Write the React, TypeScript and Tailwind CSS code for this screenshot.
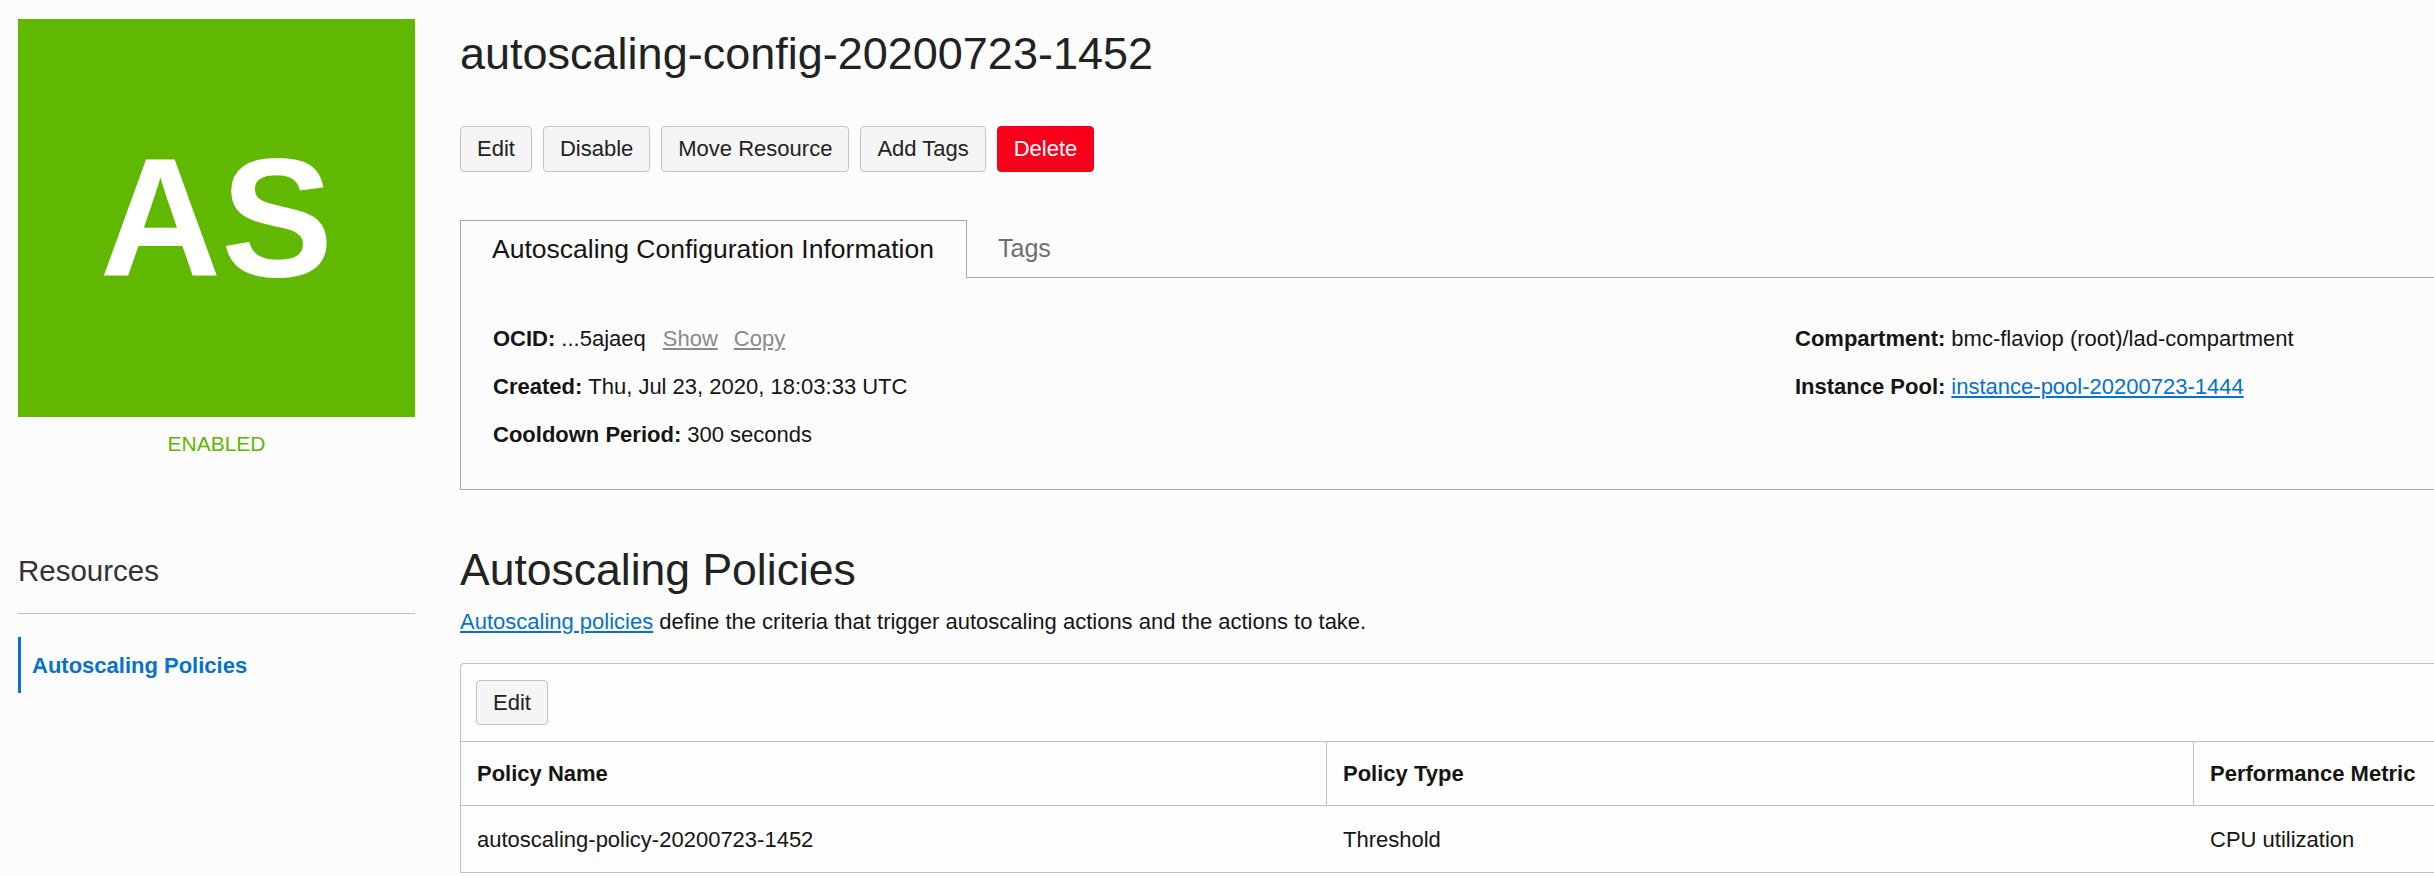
const font = { fontFamily: '"Liberation Sans", Arial, sans-serif' };

const actions = ['Edit', 'Disable', 'Move Resource', 'Add Tags'];

const Button = ({ label, danger = false }: { label: string; danger?: boolean }) => (
  <button
    className={
      danger
        ? 'h-[46px] px-[16px] rounded-[4px] border border-[#f80019] bg-[#f80019] text-white text-[22px] leading-none'
        : 'h-[46px] px-[16px] rounded-[4px] border border-[#bfc4cb] bg-[#f5f5f5] text-[#222222] text-[22px] leading-none'
    }
  >
    {label}
  </button>
);

const InfoRow = ({ label, children }: { label: string; children: React.ReactNode }) => (
  <div className="h-[48px] flex items-center text-[22px] text-[#161513] whitespace-nowrap">
    <span className="font-bold mr-[6px]">{label}</span>
    {children}
  </div>
);

const columns = ['Policy Name', 'Policy Type', 'Performance Metric'];
const rows = [['autoscaling-policy-20200723-1452', 'Threshold', 'CPU utilization']];

const App = () => {
  return (
    <div style={font} className="w-[2434px] h-[876px] overflow-hidden bg-[#fcfcfc] flex">
      {/* Left: avatar + resources nav */}
      <aside className="w-[397px] ml-[18px] pt-[19px] shrink-0 flex flex-col">
        <div className="w-[397px] h-[398px] bg-[#60b800] flex items-center justify-center">
          <span className="text-white font-bold text-[168px] leading-none">AS</span>
        </div>
        <div className="mt-[15px] h-[24px] leading-[24px] text-center text-[21px] text-[#5fb700]">ENABLED</div>

        <div className="mt-[100px] h-[29px] text-[29.5px] leading-none text-[#333333]">Resources</div>
        <div className="mt-[28px] h-px bg-[#bac1c9]" />
        <div className="mt-[23px] h-[56px] border-l-[3px] border-[#0572ce] pl-[11px] flex items-center">
          <span className="text-[22px] font-bold text-[#0572ce]">Autoscaling Policies</span>
        </div>
      </aside>

      {/* Main */}
      <main className="ml-[45px] w-[2700px] shrink-0 pt-[31px]">
        <h1 className="h-[45px] text-[45px] leading-none text-[#222222]">autoscaling-config-20200723-1452</h1>

        <div className="mt-[50px] flex gap-[11px]">
          {actions.map((a) => (
            <Button key={a} label={a} />
          ))}
          <Button label="Delete" danger />
        </div>

        {/* Tabs */}
        <div className="mt-[48px] flex">
          <div className="w-[507px] h-[58px] border-l border-t border-r border-[#a8a8a8] pl-[31px] flex items-center text-[26.5px] text-[#161513]">
            Autoscaling Configuration Information
          </div>
          <div className="flex-1 h-[58px] border-b border-[#a8a8a8] pl-[31px] flex items-center text-[25px] text-[#6f6f6f]">
            Tags
          </div>
        </div>
        <div className="border-l border-b border-[#a8a8a8] pt-[36px] pb-[31px] pl-[32px] grid grid-cols-[1302px_1fr]">
          <div>
            <InfoRow label="OCID:">
              <span>...5ajaeq</span>
              <a className="ml-[17px] text-[#8a8a8a] underline">Show</a>
              <a className="ml-[16px] text-[#8a8a8a] underline">Copy</a>
            </InfoRow>
            <InfoRow label="Created:">
              <span>Thu, Jul 23, 2020, 18:03:33 UTC</span>
            </InfoRow>
            <InfoRow label="Cooldown Period:">
              <span>300 seconds</span>
            </InfoRow>
          </div>
          <div>
            <InfoRow label="Compartment:">
              <span>bmc-flaviop (root)/lad-compartment</span>
            </InfoRow>
            <InfoRow label="Instance Pool:">
              <a className="text-[#0572ce] underline">instance-pool-20200723-1444</a>
            </InfoRow>
          </div>
        </div>

        {/* Policies */}
        <h2 className="mt-[58px] h-[44px] text-[44.5px] leading-none text-[#222222]">Autoscaling Policies</h2>
        <p className="mt-[15px] h-[30px] leading-[30px] text-[22px] text-[#161513]">
          <a className="text-[#0572ce] underline">Autoscaling policies</a> define the criteria that trigger autoscaling
          actions and the actions to take.
        </p>

        <div className="mt-[26px] w-[2602px] border-l border-t border-[#bcc3cb] rounded-tl-[4px] bg-[#fdfdfd]">
          <div className="pt-[16px] pb-[16px] pl-[15px] border-b border-[#bcc3cb]">
            <button className="h-[45px] px-[16px] rounded-[4px] border border-[#bfc4cb] bg-[#f5f5f5] text-[#222222] text-[22px] leading-none">
              Edit
            </button>
          </div>
          <div className="grid grid-cols-[866px_867px_867px] border-b border-[#bcc3cb]">
            {columns.map((c) => (
              <div
                key={c}
                className="h-[63px] px-[16px] flex items-center border-r border-[#bcc3cb] text-[22px] font-bold text-[#161513]"
              >
                {c}
              </div>
            ))}
          </div>
          {rows.map((r) => (
            <div key={r[0]} className="grid grid-cols-[866px_867px_867px] border-b border-[#bcc3cb]">
              {r.map((v, i) => (
                <div key={i} className="h-[66px] px-[16px] flex items-center text-[22px] text-[#161513]">
                  {v}
                </div>
              ))}
            </div>
          ))}
        </div>
      </main>
    </div>
  );
};

export default App;
